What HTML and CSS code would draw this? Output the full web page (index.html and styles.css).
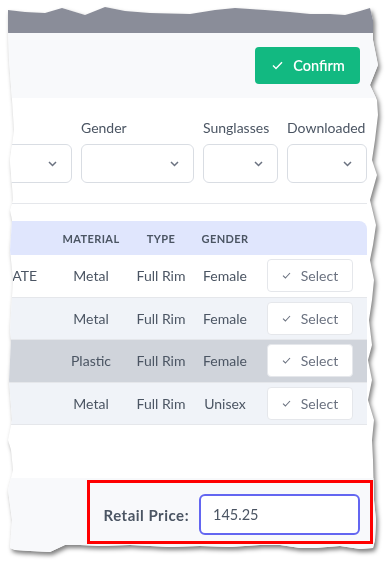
FILE: index.html
```html
<!DOCTYPE html>
<html lang="en">
<head>
  <meta charset="UTF-8">
  <meta name="viewport" content="width=device-width, initial-scale=1.0">
  <title>Frame Picker</title>
  <link rel="stylesheet" href="styles.css">
</head>
<body>
  <div class="sheet">
    <div class="paper">
      <div class="topbar"></div>

      <div class="toolbar">
        <button class="btn-confirm">
          <svg width="11" height="9" viewBox="0 0 11 9"><path d="M1 4.6 L4 7.6 L10 1.2" fill="none" stroke="#fff" stroke-width="1.4"/></svg>
          Confirm
        </button>
      </div>

      <div class="filters">
        <div class="filter-row">
          <div class="filter f-shape">
            <label>&nbsp;</label>
            <div class="select"><svg width="9" height="6" viewBox="0 0 9 6"><path d="M1 1 L4.5 4.5 L8 1" fill="none" stroke="#6b7280" stroke-width="1.5"/></svg></div>
          </div>
          <div class="filter f-gender">
            <label>Gender</label>
            <div class="select"><svg width="9" height="6" viewBox="0 0 9 6"><path d="M1 1 L4.5 4.5 L8 1" fill="none" stroke="#6b7280" stroke-width="1.5"/></svg></div>
          </div>
          <div class="filter f-sun">
            <label>Sunglasses</label>
            <div class="select"><svg width="9" height="6" viewBox="0 0 9 6"><path d="M1 1 L4.5 4.5 L8 1" fill="none" stroke="#6b7280" stroke-width="1.5"/></svg></div>
          </div>
          <div class="filter f-down">
            <label>Downloaded</label>
            <div class="select"><svg width="9" height="6" viewBox="0 0 9 6"><path d="M1 1 L4.5 4.5 L8 1" fill="none" stroke="#6b7280" stroke-width="1.5"/></svg></div>
          </div>
        </div>
      </div>

      <div class="table-wrap">
        <table class="results">
          <colgroup>
            <col class="c-name"><col class="c-mat"><col class="c-type"><col class="c-gender"><col class="c-act">
          </colgroup>
          <thead>
            <tr><th></th><th>Material</th><th>Type</th><th>Gender</th><th></th></tr>
          </thead>
          <tbody>
            <tr>
              <td class="name">LATE</td><td>Metal</td><td>Full Rim</td><td>Female</td>
              <td class="act"><button class="btn-select"><svg width="9" height="7" viewBox="0 0 9 7"><path d="M1 3.6 L3.4 6 L8 1" fill="none" stroke="#6b7280" stroke-width="1.1"/></svg>Select</button></td>
            </tr>
            <tr class="alt">
              <td class="name"></td><td>Metal</td><td>Full Rim</td><td>Female</td>
              <td class="act"><button class="btn-select"><svg width="9" height="7" viewBox="0 0 9 7"><path d="M1 3.6 L3.4 6 L8 1" fill="none" stroke="#6b7280" stroke-width="1.1"/></svg>Select</button></td>
            </tr>
            <tr class="hover">
              <td class="name"></td><td>Plastic</td><td>Full Rim</td><td>Female</td>
              <td class="act"><button class="btn-select"><svg width="9" height="7" viewBox="0 0 9 7"><path d="M1 3.6 L3.4 6 L8 1" fill="none" stroke="#6b7280" stroke-width="1.1"/></svg>Select</button></td>
            </tr>
            <tr class="alt">
              <td class="name"></td><td>Metal</td><td>Full Rim</td><td>Unisex</td>
              <td class="act"><button class="btn-select"><svg width="9" height="7" viewBox="0 0 9 7"><path d="M1 3.6 L3.4 6 L8 1" fill="none" stroke="#6b7280" stroke-width="1.1"/></svg>Select</button></td>
            </tr>
          </tbody>
        </table>
      </div>

      <div class="footer">
        <div class="price-box">
          <label for="price">Retail Price:</label>
          <input id="price" type="text" value="145.25">
        </div>
      </div>
    </div>
  </div>
</body>
</html>
```

FILE: styles.css
```css
body {
  margin: 0;
  background: #fff;
  font-family: Lato, 'Noto Sans', sans-serif;
  color: #4b5563;
  font-size: 14px;
}
.sheet {
  width: 389px;
  height: 564px;
  filter: drop-shadow(2px 3px 2px rgba(0, 0, 0, 0.5));
}
.paper {
  width: 389px;
  height: 564px;
  overflow: hidden;
  background: #fff;
  clip-path: polygon(
    8px 10px, 25px 12px, 45px 13px, 62px 8px, 85px 15px, 105px 7px, 125px 11px, 150px 13px,
    190px 14px, 215px 10px, 235px 8px, 265px 10px, 290px 12px, 310px 14px, 330px 14px,
    345px 15px, 360px 11px, 370px 8px,
    373px 20px, 373px 40px, 376px 55px, 378px 65px, 370px 85px, 377px 100px, 378px 115px,
    375px 140px, 372px 160px, 377px 175px, 370px 200px, 376px 225px, 373px 245px, 370px 260px,
    374px 280px, 372px 300px, 369px 320px, 372px 345px, 368px 360px, 372px 380px, 368px 400px,
    374px 420px, 372px 440px, 373px 460px, 374px 500px, 376px 520px, 375px 540px, 373px 548px,
    360px 549px, 340px 546px, 315px 548px, 300px 548px, 280px 545px, 260px 545px, 230px 547px,
    200px 546px, 170px 547px, 130px 545px, 100px 546px, 80px 545px, 65px 545px, 50px 552px,
    30px 551px, 15px 550px, 10px 548px,
    12px 520px, 8px 490px, 13px 470px, 11px 450px, 8px 440px, 12px 420px, 9px 380px, 11px 340px,
    10px 330px, 13px 280px, 10px 250px, 12px 220px, 10px 210px, 13px 200px, 10px 160px,
    14px 130px, 12px 100px, 9px 60px, 8px 30px
  );
}
.topbar {
  height: 33px;
  background: #8a8d99;
}
.toolbar {
  height: 65px;
  background: #f8f9fb;
  display: flex;
  justify-content: flex-end;
  align-items: center;
  padding-right: 29px;
}
.btn-confirm {
  display: flex;
  align-items: center;
  gap: 10px;
  height: 37px;
  width: 105px;
  justify-content: center;
  background: #12b981;
  color: #fff;
  border: none;
  border-radius: 4px;
  font-family: inherit;
  font-size: 14.5px;
  font-weight: 600;
  padding: 0 0 0 2px;
}
.filters {
  padding: 20px 22px 0 0;
}
.filter-row {
  display: flex;
  justify-content: flex-end;
  gap: 9px;
  padding-bottom: 20px;
  border-bottom: 1px solid #e5e7eb;
}
.filter {
  flex-shrink: 0;
  display: flex;
  flex-direction: column;
  gap: 6px;
}
.filter label {
  line-height: 20px;
  white-space: nowrap;
}
.f-shape { width: 100px; }
.f-gender { width: 113px; }
.f-sun { width: 75px; }
.f-down { width: 80px; }
.select {
  box-sizing: border-box;
  height: 39px;
  border: 1px solid #d9dde3;
  border-radius: 6px;
  background: #fff;
  display: flex;
  justify-content: flex-end;
  align-items: center;
  padding-right: 14px;
}
.table-wrap {
  display: flex;
  justify-content: flex-end;
  padding: 17px 22px 53px 0;
}
.results {
  flex-shrink: 0;
  width: 417px;
  table-layout: fixed;
  border-collapse: collapse;
}
.c-name { width: 100px; }
.c-mat { width: 82px; }
.c-type { width: 58px; }
.c-gender { width: 70px; }
.c-act { width: 107px; }
.results thead tr {
  background: #e0e6fd;
}
.results th {
  height: 34px;
  padding: 0;
  font-size: 11px;
  font-weight: 700;
  letter-spacing: 0.4px;
  text-transform: uppercase;
  color: #4b5563;
  text-align: center;
}
.results th:last-child {
  border-top-right-radius: 8px;
}
.results td {
  height: 41.6px;
  padding: 0;
  text-align: center;
  white-space: nowrap;
  border-bottom: 1px solid #e5e7eb;
}
.results td.name {
  text-align: right;
  padding-right: 13px;
}
.results td.act {
  text-align: left;
  padding-left: 7px;
}
.results tr.alt { background: #f0f3f8; }
.results tr.hover { background: #d0d4db; }
.btn-select {
  display: flex;
  align-items: center;
  justify-content: center;
  gap: 10px;
  width: 86px;
  height: 33px;
  background: #fff;
  border: 1px solid #e5e7eb;
  border-radius: 4px;
  color: #6b7280;
  font-family: inherit;
  font-size: 14px;
}
.footer {
  background: #f8f9fb;
  display: flex;
  justify-content: flex-end;
  padding: 2px 16px 20px 0;
}
.price-box {
  display: flex;
  align-items: center;
  gap: 10px;
  border: 3px solid #ff0000;
  padding: 11px 10px 6px 14px;
}
.price-box label {
  font-weight: 700;
  font-size: 15px;
  letter-spacing: 0.5px;
}
.price-box input {
  box-sizing: border-box;
  width: 161px;
  height: 41px;
  border: 2px solid #6366f1;
  border-radius: 6px;
  padding: 0 12px;
  font-family: inherit;
  font-size: 14.5px;
  color: #4b5563;
  outline: none;
}
```
